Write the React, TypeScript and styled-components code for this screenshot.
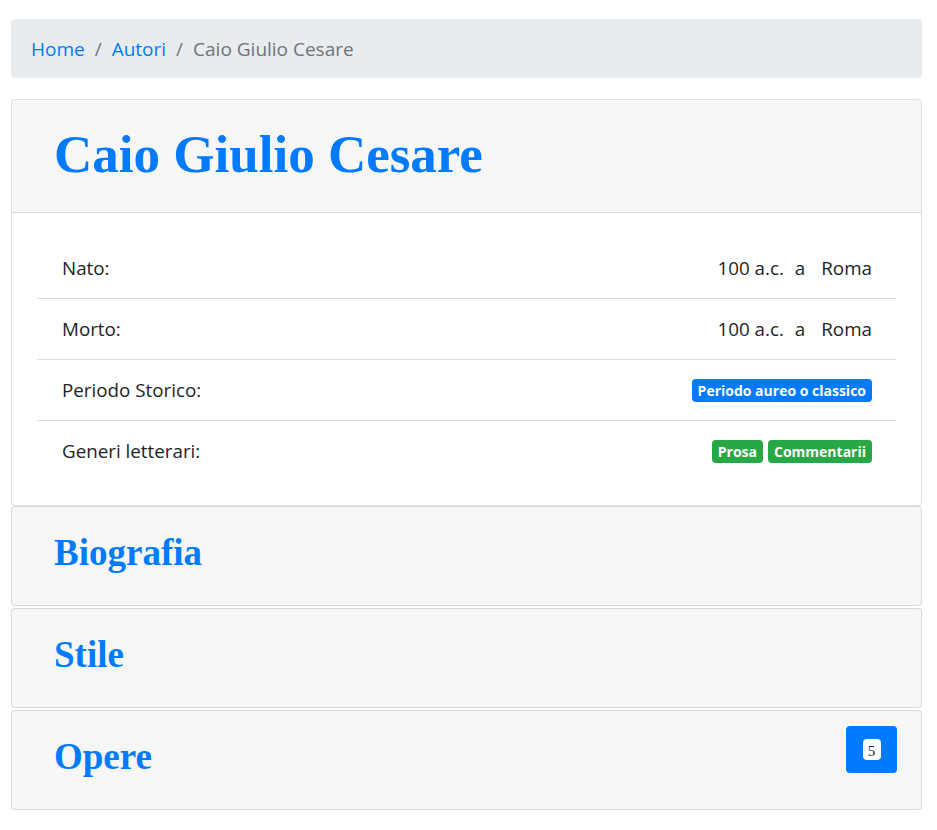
import React from "react";
import styled, { createGlobalStyle } from "styled-components";

const Global = createGlobalStyle`
  html, body { margin: 0; padding: 0; background: #fff; }
  body { font-family: "Open Sans", "Noto Sans", sans-serif; color: #212529; }
  * { box-sizing: border-box; }
`;

const Page = styled.div`
  padding: 19px 15px 20px 11px;
`;

const Breadcrumb = styled.nav`
  display: flex;
  align-items: center;
  height: 59px;
  padding: 0 20px;
  background: #e9ecef;
  border-radius: 4px;
  font-size: 19px;
  margin-bottom: 21px;
`;

const Crumb = styled.a<{ $active?: boolean }>`
  color: ${(p) => (p.$active ? "#6c757d" : "#007bff")};
  text-decoration: none;
`;

const Sep = styled.span`
  color: #6c757d;
  padding: 0 10px;
`;

const Card = styled.section<{ $gap?: number }>`
  border: 1px solid rgba(0, 0, 0, 0.125);
  border-radius: 4px;
  background: #fff;
  margin-bottom: ${(p) => p.$gap ?? 0}px;
  overflow: hidden;
`;

const CardHeader = styled.header`
  background: #f7f7f7;
  border-bottom: 1px solid rgba(0, 0, 0, 0.125);
  height: 113px;
  display: flex;
  align-items: center;
  padding: 0 42px;
`;

const Title = styled.h1`
  margin: 0 0 4px;
  font-family: "Liberation Serif", "DejaVu Serif", serif;
  font-weight: 700;
  font-size: 53px;
  color: #007bff;
`;

const CardBody = styled.div`
  padding: 24px 25px;
`;

const List = styled.ul`
  list-style: none;
  margin: 0;
  padding: 0;
`;

const Row = styled.li`
  display: flex;
  align-items: center;
  justify-content: space-between;
  height: 61px;
  padding: 0 24px 0 25px;
  font-size: 18.8px;
  & + & {
    border-top: 1px solid rgba(0, 0, 0, 0.125);
  }
`;

const Value = styled.span`
  display: flex;
  gap: 11px;
  & > span:nth-child(3) { margin-left: 5px; }
`;

const Badges = styled.span`
  display: flex;
  gap: 5px;
`;

const Badge = styled.span<{ $color: string }>`
  display: inline-flex;
  align-items: center;
  height: 23px;
  padding: 0 6px;
  background: ${(p) => p.$color};
  color: #fff;
  font-weight: 700;
  font-size: 14px;
  border-radius: 4px;
`;

const Section = styled(Card)`
  background: #f7f7f7;
  height: 100px;
  display: flex;
  align-items: flex-start;
  justify-content: space-between;
  padding: 0 24px 0 42px;
`;

const SectionTitle = styled.h2`
  margin: 0;
  line-height: 92px;
  font-family: "Liberation Serif", "DejaVu Serif", serif;
  font-weight: 700;
  font-size: 37px;
  color: #007bff;
`;

const CountButton = styled.button`
  margin-top: 15px;
  width: 51px;
  height: 47px;
  border: none;
  border-radius: 4px;
  background: #007bff;
  display: flex;
  align-items: center;
  justify-content: center;
  padding: 0;
`;

const CountBadge = styled.span`
  display: inline-flex;
  align-items: center;
  justify-content: center;
  width: 18px;
  height: 21px;
  border-radius: 4px;
  background: #fff;
  color: #212529;
  font-family: "Liberation Serif", serif;
  font-size: 15px;
  font-weight: 400;
  padding-top: 4px;
`;

export default function App() {
  return (
    <>
      <Global />
      <Page>
        <Breadcrumb>
          <Crumb href="#">Home</Crumb>
          <Sep>/</Sep>
          <Crumb href="#">Autori</Crumb>
          <Sep>/</Sep>
          <Crumb $active>Caio Giulio Cesare</Crumb>
        </Breadcrumb>

        <Card>
          <CardHeader>
            <Title>Caio Giulio Cesare</Title>
          </CardHeader>
          <CardBody>
            <List>
              <Row>
                <span>Nato:</span>
                <Value>
                  <span>100 a.c.</span>
                  <span>a</span>
                  <span>Roma</span>
                </Value>
              </Row>
              <Row>
                <span>Morto:</span>
                <Value>
                  <span>100 a.c.</span>
                  <span>a</span>
                  <span>Roma</span>
                </Value>
              </Row>
              <Row>
                <span>Periodo Storico:</span>
                <Badges>
                  <Badge $color="#007bff">Periodo aureo o classico</Badge>
                </Badges>
              </Row>
              <Row>
                <span>Generi letterari:</span>
                <Badges>
                  <Badge $color="#28a745">Prosa</Badge>
                  <Badge $color="#28a745">Commentarii</Badge>
                </Badges>
              </Row>
            </List>
          </CardBody>
        </Card>

        <Section $gap={2}>
          <SectionTitle>Biografia</SectionTitle>
        </Section>
        <Section $gap={2}>
          <SectionTitle>Stile</SectionTitle>
        </Section>
        <Section>
          <SectionTitle>Opere</SectionTitle>
          <CountButton>
            <CountBadge>5</CountBadge>
          </CountButton>
        </Section>
      </Page>
    </>
  );
}
